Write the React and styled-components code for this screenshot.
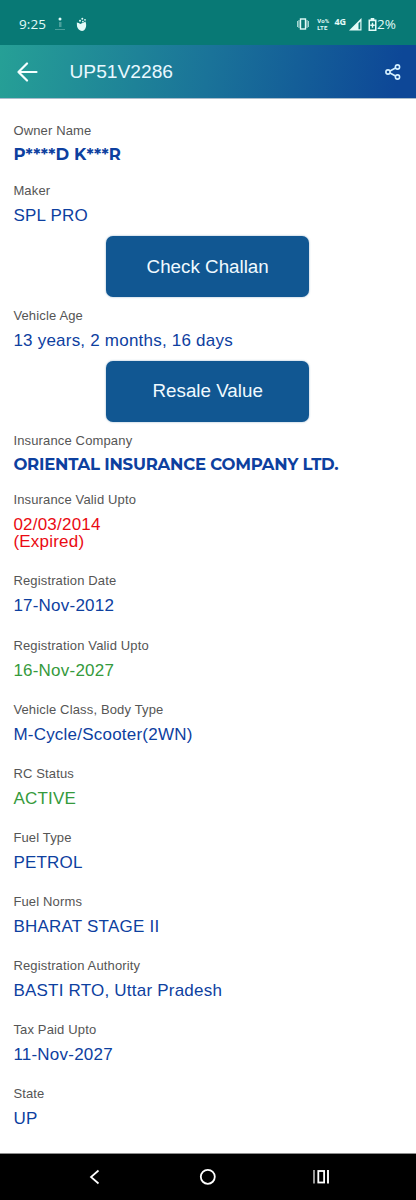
import styled, { createGlobalStyle } from 'styled-components';

const GlobalStyle = createGlobalStyle`
  * {
    box-sizing: border-box;
  }

  body {
    margin: 0;
    background-color: #FFFFFF;
    font-family: "Liberation Sans", Arial, sans-serif;
  }
`;

const Screen = styled.div`
  display: flex;
  flex-direction: column;
  width: 416px;
  height: 1200px;
  overflow: hidden;
  background-color: #FFFFFF;
`;

const StatusBarStyled = styled.div`
  flex: none;
  display: flex;
  align-items: center;
  justify-content: space-between;
  height: 45px;
  padding: 3px 20px 0 19px;
  background-color: #087975;
  color: #E3FBF8;
`;

const StatusGroup = styled.div`
  display: flex;
  align-items: center;
`;

const StatusText = styled.span`
  font-family: "Open Sans", sans-serif;
  font-size: 13.5px;
  line-height: 16px;
  letter-spacing: ${({ $spacing }) => $spacing || '0'};
`;

const Lte = styled.span`
  display: flex;
  flex-direction: column;
  margin: 0 5px 0 8px;
  font-family: Roboto, sans-serif;
  font-size: 6px;
  font-weight: 700;
  line-height: 7px;
  letter-spacing: 0.2px;
`;

const Network = styled.span`
  align-self: flex-start;
  margin-right: 3px;
  font-family: "Open Sans", sans-serif;
  font-size: 9px;
  font-weight: 700;
  line-height: 11px;
`;

const StatusIcon = styled.svg`
  flex: none;
  display: block;
  margin-left: ${({ $left }) => $left || '0'};
`;

const HeaderStyled = styled.header`
  flex: none;
  display: flex;
  align-items: center;
  height: 54px;
  padding: 0 14px 0 16px;
  border-bottom: 1px solid #A9BCCB;
  background: linear-gradient(100deg, #26A096 0%, #1A7399 50%, #0D4797 95%);
  color: #FFFFFF;
`;

const Title = styled.h1`
  flex: 1;
  margin: 0 0 0 31.5px;
  font-size: 19.2px;
  font-weight: 400;
  line-height: 24px;
  color: #E9F8FF;
`;

const Details = styled.main`
  flex: 1;
  padding: 24px 14px 0 13.4px;
`;

const Field = styled.div`
  display: flex;
  flex-direction: column;
  height: ${({ $height }) => $height || '64.07px'};
`;

const Label = styled.span`
  font-size: 13px;
  line-height: 16px;
  letter-spacing: 0.15px;
  color: #555555;
`;

const colors = {
  blue: '#0D409F',
  red: '#EA0A12',
  green: '#359A3C',
};

const Value = styled.span`
  margin-top: 8px;
  font-size: 17px;
  line-height: 17.3px;
  letter-spacing: 0.22px;
  white-space: pre-line;
  color: ${({ $color }) => colors[$color] || colors.blue};
`;

const StrongValue = styled(Value)`
  margin-top: 7px;
  font-family: Montserrat, Lato, sans-serif;
  font-size: 16.5px;
  font-weight: 700;
  letter-spacing: ${({ $spacing }) => $spacing || '0'};
`;

const Button = styled.button`
  display: block;
  width: 203px;
  height: 61px;
  margin: 0 auto 10.6px;
  padding: 0;
  border: 0;
  border-radius: 7px;
  background-color: #115792;
  box-shadow: 0 0 2px rgba(17, 87, 146, 0.5);
  font-family: inherit;
  font-size: 18.8px;
  color: #F0FAFF;
`;

const NavBarStyled = styled.nav`
  flex: none;
  display: flex;
  align-items: center;
  justify-content: space-between;
  height: 47px;
  padding: 0 86px 0 88px;
  border-top: 1px solid #8E8E8E;
  background-color: #000000;
`;

const StatusBar = () => (
  <StatusBarStyled>
    <StatusGroup>
      <StatusText $spacing="0.1px">9:25</StatusText>
      <StatusIcon $left="8px" width="12" height="14" viewBox="0 0 12 14" fill="currentColor">
        <circle cx="6" cy="2" r="1.5" />
        <path d="M5 5h2.500v5H5z" opacity="0.3" />
        <path d="M1 12h10v1H1z" opacity="0.3" />
      </StatusIcon>
      <StatusIcon $left="10px" width="12" height="15" viewBox="0 0 12 15" fill="currentColor">
        <path d="M.8 5.500c1.500 0 2.500.8 3.600 1.600C5.500 6 7.500 6.600 9.400 4.600c1 2.400 1 4.600.2 6.400C8.800 12.800 7.600 14 6 14c-2.400-.4-4.500-2.400-5-4.800z" />
        <circle cx="4" cy="3.800" r="1" />
        <circle cx="6.300" cy="1.800" r="1" />
        <circle cx="6.900" cy="4.600" r="0.900" />
        <circle cx="9" cy="2.800" r="0.900" />
      </StatusIcon>
    </StatusGroup>
    <StatusGroup>
      <StatusIcon width="12" height="12" viewBox="0 0 12 12" fill="none" stroke="currentColor">
        <rect x="3.500" y="1" width="5" height="10" strokeWidth="1.400" />
        <path d="M.6 3v6M11.400 3v6M2 2v8M10 2v8" strokeWidth=".8" />
      </StatusIcon>
      <Lte>
        <span>Vo%</span>
        <span>LTE</span>
      </Lte>
      <Network>4G</Network>
      <StatusIcon width="13" height="13" viewBox="0 0 13 13">
        <path d="M0 12.500L12.500 0v12.500z" fill="currentColor" />
        <path d="M9.500 5.200l1.800-1.800v7.800H9.500z" fill="#087975" />
      </StatusIcon>
      <StatusIcon $left="6px" width="9" height="13" viewBox="0 0 9 13">
        <path d="M2.700 0h3.600v1.500H8.500V13H.5V1.500h2.200z" fill="currentColor" />
        <path d="M2 3.200h5v8.300H2z" fill="#087975" />
        <path d="M3.800 4.800h1.400v1.800h1.500v1.400H5.200v1.800H3.800V8H2.300V6.600h1.500z" fill="currentColor" />
      </StatusIcon>
      <StatusText>2%</StatusText>
    </StatusGroup>
  </StatusBarStyled>
);

const Header = () => (
  <HeaderStyled>
    <svg width="22" height="20" viewBox="0 0 22 20" fill="none" stroke="#F4FFFF" strokeWidth="2.200" strokeLinecap="round" strokeLinejoin="round">
      <path d="M20.500 10H2.500M11 1.500L2.500 10l8.500 8.500" />
    </svg>
    <Title>UP51V2286</Title>
    <svg width="18" height="16" viewBox="0 0 18 16" fill="none" stroke="#D5F1FF" strokeWidth="1.600">
      <circle cx="4" cy="8" r="2.100" />
      <circle cx="13.500" cy="3" r="2.100" />
      <circle cx="13.500" cy="13" r="2.100" />
      <path d="M6 7l5.500-3M6 9l5.500 3" />
    </svg>
  </HeaderStyled>
);

const fields = [
  { label: 'Registration Date', value: '17-Nov-2012' },
  { label: 'Registration Valid Upto', value: '16-Nov-2027', color: 'green' },
  { label: 'Vehicle Class, Body Type', value: 'M-Cycle/Scooter(2WN)' },
  { label: 'RC Status', value: 'ACTIVE', color: 'green' },
  { label: 'Fuel Type', value: 'PETROL' },
  { label: 'Fuel Norms', value: 'BHARAT STAGE II' },
  { label: 'Registration Authority', value: 'BASTI RTO, Uttar Pradesh' },
  { label: 'Tax Paid Upto', value: '11-Nov-2027' },
  { label: 'State', value: 'UP' },
];

const NavBar = () => (
  <NavBarStyled>
    <svg width="12" height="16" viewBox="0 0 12 16" fill="none" stroke="#FFFFFF" strokeWidth="1.700">
      <path d="M10.500 1.500L3 8l7.500 6.500" />
    </svg>
    <svg width="22" height="18" viewBox="0 0 22 18" fill="none" stroke="#FFFFFF" strokeWidth="1.800">
      <circle cx="12.800" cy="8.800" r="7" />
    </svg>
    <svg width="18" height="16" viewBox="0 0 18 16" fill="none" stroke="#FFFFFF">
      <rect x="6.300" y="2" width="5.800" height="11.500" strokeWidth="1.800" />
      <path d="M2 1v13.500" strokeWidth="1.200" />
      <path d="M16 1v13.500" strokeWidth="1.900" />
    </svg>
  </NavBarStyled>
);

const App = () => {
  return (
    <>
      <GlobalStyle />
      <Screen>
        <StatusBar />
        <Header />
        <Details>
          <Field $height="59.5px">
            <Label>Owner Name</Label>
            <StrongValue $spacing="0.1px">P****D K***R</StrongValue>
          </Field>
          <Field $height="53.5px">
            <Label>Maker</Label>
            <Value>SPL PRO</Value>
          </Field>
          <Button>Check Challan</Button>
          <Field $height="53.4px">
            <Label>Vehicle Age</Label>
            <Value>13 years, 2 months, 16 days</Value>
          </Field>
          <Button>Resale Value</Button>
          <Field $height="59.5px">
            <Label>Insurance Company</Label>
            <StrongValue $spacing="-0.21px">ORIENTAL INSURANCE COMPANY LTD.</StrongValue>
          </Field>
          <Field $height="81.4px">
            <Label>Insurance Valid Upto</Label>
            <Value $color="red">{'02/03/2014\n(Expired)'}</Value>
          </Field>
          {fields.map(({ label, value, color }) => (
            <Field key={label}>
              <Label>{label}</Label>
              <Value $color={color}>{value}</Value>
            </Field>
          ))}
        </Details>
        <NavBar />
      </Screen>
    </>
  );
};

export default App;
